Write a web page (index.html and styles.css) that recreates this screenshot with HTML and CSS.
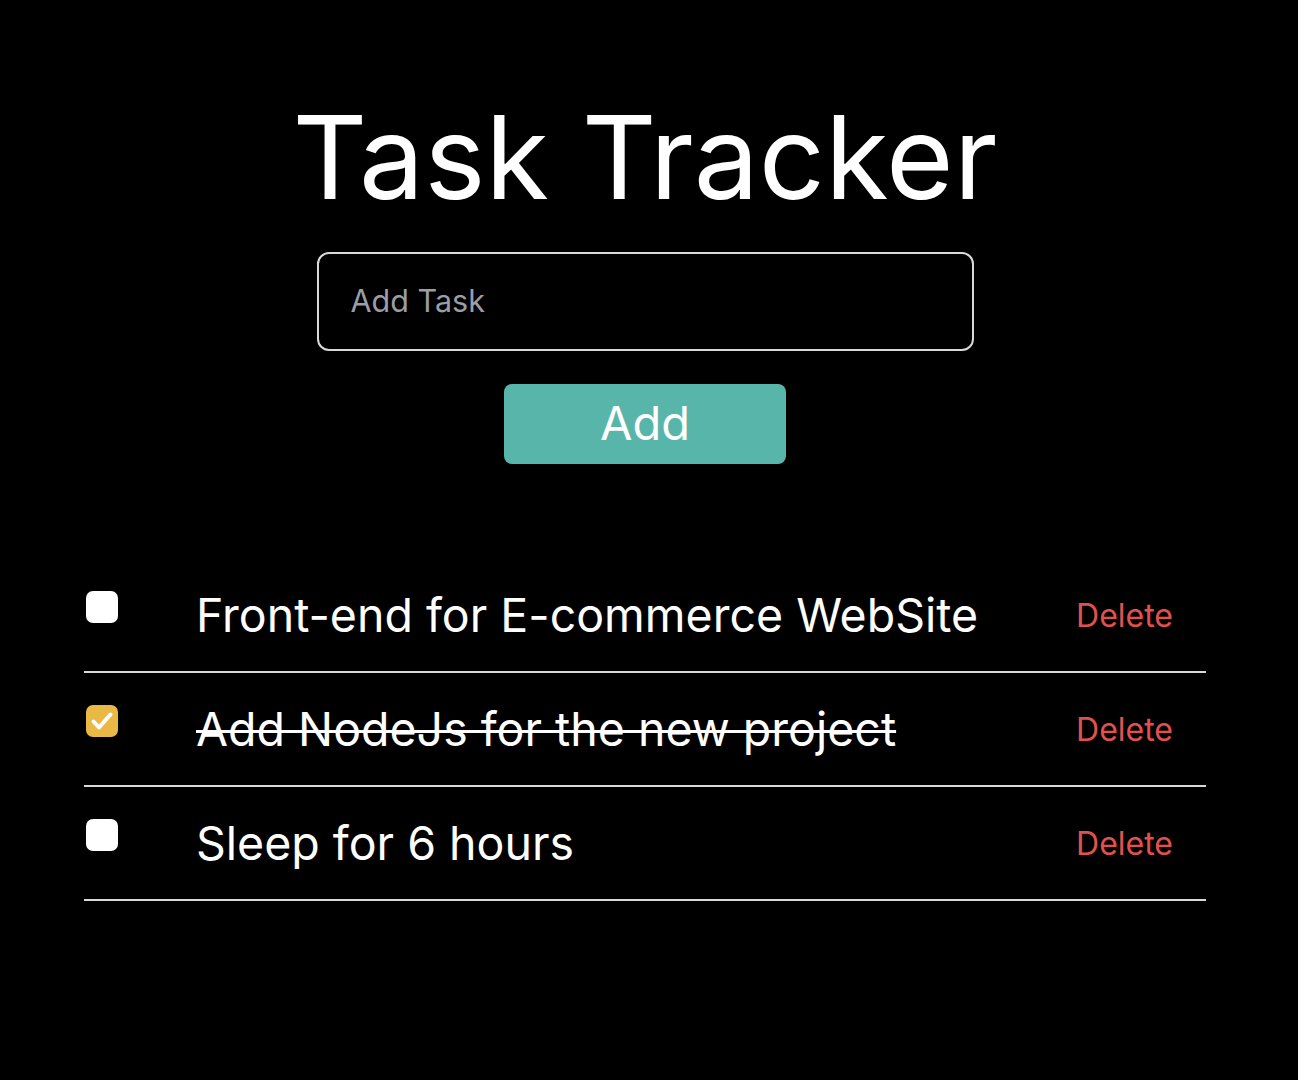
FILE: index.html
```html
<!DOCTYPE html>
<html lang="en">
<head>
<meta charset="utf-8">
<title>Task Tracker</title>
<link rel="stylesheet" href="styles.css">
</head>
<body>
<main class="app">
  <h1 class="title">Task Tracker</h1>
  <form class="add-form">
    <input class="task-input" type="text" placeholder="Add Task">
    <button class="add-btn" type="button">Add</button>
  </form>
  <ul class="tasks">
    <li class="task">
      <span class="check"></span>
      <span class="task-text">Front-end for E-commerce WebSite</span>
      <span class="delete">Delete</span>
    </li>
    <li class="task">
      <span class="check checked"><svg viewBox="0 0 32 32" width="32" height="32"><path d="M7.5 16.5 L13 22.5 L24.5 9.5" fill="none" stroke="#fff" stroke-width="4" stroke-linecap="round" stroke-linejoin="round"/></svg></span>
      <span class="task-text done">Add NodeJs for the new project</span>
      <span class="delete">Delete</span>
    </li>
    <li class="task">
      <span class="check"></span>
      <span class="task-text">Sleep for 6 hours</span>
      <span class="delete">Delete</span>
    </li>
  </ul>
</main>
</body>
</html>
```

FILE: styles.css
```css
html, body {
  margin: 0;
  padding: 0;
  background: #000;
}
body {
  font-family: Inter, "Noto Sans", sans-serif;
  color: #fff;
}
.app {
  width: 1122px;
  margin-left: 84px;
  padding-top: 92px;
  display: flex;
  flex-direction: column;
  align-items: center;
}
.title {
  margin: 0;
  font-size: 116px;
  font-weight: 400;
  line-height: 130px;
  letter-spacing: 0;
}
.add-form {
  margin-top: 30px;
  display: flex;
  flex-direction: column;
  align-items: center;
}
.task-input {
  box-sizing: border-box;
  width: 657px;
  height: 99px;
  border: 2px solid #d9d9dc;
  border-radius: 12px;
  background: #000;
  padding: 0 32px;
  font-family: inherit;
  font-size: 30.5px;
  color: #fff;
  padding-bottom: 2px;
}
.task-input::placeholder {
  color: #9b9ea8;
}
.add-btn {
  margin-top: 33px;
  width: 282px;
  height: 80px;
  border: none;
  border-radius: 8px;
  background: #57b6a9;
  color: #fff;
  font-family: inherit;
  font-size: 47px;
  padding: 0 0 4px;
}
.tasks {
  list-style: none;
  margin: 95px 0 0;
  padding: 0;
  width: 100%;
}
.task {
  box-sizing: border-box;
  height: 114px;
  border-bottom: 2px solid #d9d9dc;
  display: flex;
  align-items: center;
  padding: 0 33px 0 2px;
}
.check {
  width: 32px;
  height: 32px;
  border-radius: 7px;
  background: #fff;
  flex: none;
  margin-bottom: 16px;
  display: flex;
}
.check.checked {
  background: #e9b845;
}
.task-text {
  margin-left: 78px;
  flex: 1;
  font-size: 46.5px;
}
.task-text.done {
  text-decoration: line-through;
  text-decoration-thickness: 3px;
}
.delete {
  color: #e0524d;
  font-size: 32px;
}
```
